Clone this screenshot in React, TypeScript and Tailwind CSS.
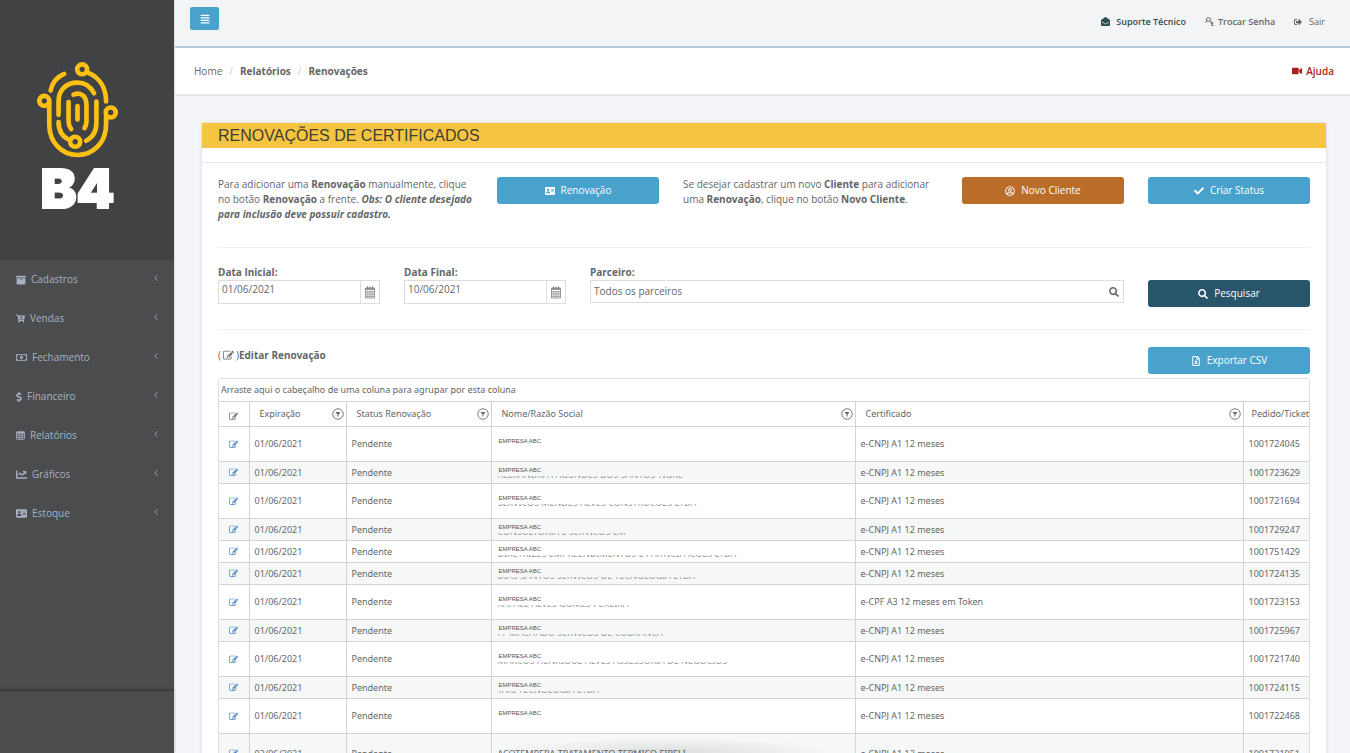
import React, { useState } from "react";
import type { IconType } from "react-icons";
import { ChevronLeft } from "lucide-react";
import {
  FaAddressCard,
  FaAlignJustify,
  FaArchive,
  FaCartPlus,
  FaChartLine,
  FaCheck,
  FaDollarSign,
  FaEnvelopeOpen,
  FaRegFileExcel,
  FaRegMoneyBillAlt,
  FaRegUserCircle,
  FaSearch,
  FaSignOutAlt,
  FaVideo,
} from "react-icons/fa";

type IconComponent = IconType | ((props: { className?: string }) => React.JSX.Element);

type MenuItem = { label: string; icon: IconComponent; size: string };

type Renewal = {
  date: string;
  certificate: string;
  ticket: string;
  height: string;
  company?: string;
  legalName?: string;
};

const menu: MenuItem[] = [
  { label: "Cadastros", icon: FaArchive, size: "w-[10px] h-[10px]" },
  { label: "Vendas", icon: FaCartPlus, size: "w-[9px] h-[9px]" },
  { label: "Fechamento", icon: FaRegMoneyBillAlt, size: "w-[11px] h-[11px]" },
  { label: "Financeiro", icon: FaDollarSign, size: "w-[6px] h-[10px]" },
  { label: "Relatórios", icon: TableIcon, size: "w-[9px] h-[9px]" },
  { label: "Gráficos", icon: FaChartLine, size: "w-[11px] h-[11px]" },
  { label: "Estoque", icon: FaAddressCard, size: "w-[11px] h-[11px]" },
];

const A1 = "e-CNPJ A1 12 meses";
const SHORT = "h-[22px]";
const TALL = "h-[35px]";

const renewals: Renewal[] = [
  { date: "01/06/2021", certificate: A1, ticket: "1001724045", height: TALL },
  { date: "01/06/2021", certificate: A1, ticket: "1001723629", height: SHORT, legalName: "ALEXANDRA FAGUNDES DOS SANTOS TIGRE" },
  { date: "01/06/2021", certificate: A1, ticket: "1001721694", height: TALL, legalName: "SERVICOS MENDES ALVES CONSTRUCOES LTDA" },
  { date: "01/06/2021", certificate: A1, ticket: "1001729247", height: SHORT, legalName: "CONSULTORIA E SERVICOS EM" },
  { date: "01/06/2021", certificate: A1, ticket: "1001751429", height: SHORT, legalName: "DIRETRIZES EMPREENDIMENTOS E PARTICIPACOES LTDA" },
  { date: "01/06/2021", certificate: A1, ticket: "1001724135", height: SHORT, legalName: "DIAS SANTOS SERVICOS DE TECNOLOGIA LTDA" },
  { date: "01/06/2021", certificate: "e-CPF A3 12 meses em Token", ticket: "1001723153", height: TALL, legalName: "RAFAEL ALVES GOMES PEREIRA" },
  { date: "01/06/2021", certificate: A1, ticket: "1001725967", height: SHORT, legalName: "J F MACHADO SERVICOS DE COBRANCA" },
  { date: "01/06/2021", certificate: A1, ticket: "1001721740", height: TALL, legalName: "MARCOS HENRIQUE ALVES ASSESSORIA DE NEGOCIOS" },
  { date: "01/06/2021", certificate: A1, ticket: "1001724115", height: SHORT, legalName: "TAXI TECNOLOGIA LTDA" },
  { date: "01/06/2021", certificate: A1, ticket: "1001722468", height: TALL },
  { date: "02/06/2021", certificate: A1, ticket: "1001721951", height: "h-[40px]", company: "ACOTEMPERA TRATAMENTO TERMICO EIRELI" },
];

function Logo() {
  return (
    <div className="flex flex-col items-center">
      <svg viewBox="108 64 248 292" className="w-[83px] h-[97px]" fill="none" stroke="#fdc013" strokeWidth="14" strokeLinecap="round">
        <circle cx="246" cy="89" r="15" />
        <circle cx="132" cy="184" r="15" />
        <circle cx="332" cy="219" r="15" />
        <circle cx="225" cy="307" r="15" />
        <path d="M151 153C156 130 170 112 192 103" />
        <path d="M262 98C299 113 318 146 318 186" />
        <path d="M147 188V255C147 309 185 347 232 347C280 347 318 309 318 255V232" />
        <path d="M175 226V186C175 149 200 129 232 129C255 129 272 142 282 161" />
        <path d="M175 248C175 273 187 293 208 302" />
        <path d="M289 186V250C289 276 278 294 258 304" />
        <path d="M220 165C244 155 259 172 259 196V245C259 254 257 260 253 266" />
        <path d="M205 188V245C205 256 208 262 213 269" />
        <path d="M232 200V240" />
      </svg>
      <span className="font-[Inter,sans-serif] font-black text-[54px] leading-[62px] text-white [-webkit-text-stroke:2px_white]">B4</span>
    </div>
  );
}

function EditIcon({ className }: { className?: string }) {
  return (
    <svg viewBox="0 0 1792 1792" fill="currentColor" className={className}>
      <path d="M888 1184l116-116-152-152-116 116v56h96v96h56zm440-720q-16-16-33 1l-350 350q-17 17-1 33t33-1l350-350q17-17 1-33zm80 594v190q0 119-84.5 203.5t-203.5 84.5h-832q-119 0-203.5-84.5t-84.5-203.5v-832q0-119 84.5-203.5t203.5-84.5h832q63 0 117 25 15 7 18 23 3 17-9 29l-49 49q-14 14-32 8-23-6-45-6h-832q-66 0-113 47t-47 113v832q0 66 47 113t113 47h832q66 0 113-47t47-113v-126q0-13 9-22l64-64q15-15 35-7t20 29zm-96-738l288 288-672 672h-288v-288zm444 132l-92 92-288-288 92-92q28-28 68-28t68 28l152 152q28 28 28 68t-28 68z" />
    </svg>
  );
}

function TableIcon({ className }: { className?: string }) {
  return (
    <svg viewBox="0 0 27 27" className={className} fill="none" stroke="currentColor" strokeWidth="2.5">
      <rect x="1.5" y="2" width="24" height="23" rx="2" />
      <path d="M2 5H25" strokeWidth="5" />
      <path d="M2 12.5H25M2 19H25M9.5 5V25M17.5 5V25" />
    </svg>
  );
}

function KeyIcon() {
  return (
    <svg viewBox="0 0 18 18" className="size-[9px]" fill="none" stroke="currentColor" strokeWidth="2">
      <ellipse cx="7" cy="5" rx="4.5" ry="3.5" />
      <path d="M4 8L1 11M9 8L12 11" />
      <circle cx="14" cy="12" r="2" />
      <path d="M14 14V18M14 17H17" />
    </svg>
  );
}

function CalendarIcon() {
  return (
    <svg viewBox="0 0 20 26" className="w-[10px] h-[13px]" fill="none" stroke="#777">
      <path d="M1 4H19V24H1Z" strokeWidth="1.5" />
      <path d="M1 6H19" strokeWidth="3" />
      <path d="M5 1V4M10 1V4M15 1V4" strokeWidth="2" />
      <path d="M3 11.5H17M3 16H17M3 20.5H17" strokeWidth="3" strokeDasharray="2.6 1.2" />
    </svg>
  );
}

function FilterIcon() {
  return (
    <svg viewBox="0 0 24 24" className="size-3 shrink-0" fill="none" stroke="#666" strokeWidth="1.7">
      <circle cx="12" cy="12" r="10.5" />
      <path d="M7 8H17L13 13V17H11V13Z" fill="#666" stroke="none" />
    </svg>
  );
}

function ActionButton({ icon: Icon, label, color }: { icon: IconType; label: string; color: string }) {
  return (
    <button className={`h-[27px] w-full rounded-[3px] text-white flex items-center justify-center gap-[6px] ${color}`}>
      <Icon className="text-[10px]" />
      {label}
    </button>
  );
}

function DateField({ id, label, initial }: { id: string; label: string; initial: string }) {
  const [value, setValue] = useState(initial);
  return (
    <div className="col-span-2">
      <label htmlFor={id} className="block font-bold leading-[15px]">{label}</label>
      <div className="flex h-6 border border-[#ddd]">
        <input
          id={id}
          className="min-w-0 flex-1 px-[3px] pb-[5px] outline-none"
          value={value}
          onChange={(e) => setValue(e.target.value)}
        />
        <button aria-label="Abrir calendário" className="w-[19px] border-l border-[#ddd] flex items-center justify-center">
          <CalendarIcon />
        </button>
      </div>
    </div>
  );
}

function HeaderCell({ children }: { children: string }) {
  return (
    <th className="border-r border-[#d3d3d3] pl-[10px] pr-[2px] font-normal">
      <div className="flex items-center justify-between">
        <span>{children}</span>
        <FilterIcon />
      </div>
    </th>
  );
}

function RenewalRow({ row, striped }: { row: Renewal; striped: boolean }) {
  return (
    <tr className={`border-b border-[#d3d3d3] ${row.height} ${striped ? "bg-[#f6f8f7]" : "bg-white"}`}>
      <td className="border-r border-[#d3d3d3]">
        <a href="#editar" aria-label="Editar renovação" className="flex justify-center text-[#3c7fc0]">
          <EditIcon className="size-[9px]" />
        </a>
      </td>
      <td className="border-r border-[#d3d3d3] pl-[5px]">{row.date}</td>
      <td className="border-r border-[#d3d3d3] pl-[5px]">Pendente</td>
      <td className="border-r border-[#d3d3d3] pl-[6px]">
        {row.company ? (
          row.company
        ) : (
          <div className="pb-[2px] text-[#999]">
            <div className="pl-px font-['Liberation_Sans',sans-serif] text-[6px] leading-[8px] text-[#555]">EMPRESA ABC</div>
            <div className="mt-[2px] flex h-[2px] items-end overflow-hidden leading-[7px]">{row.legalName}</div>
          </div>
        )}
      </td>
      <td className="border-r border-[#d3d3d3] pl-[5px]">{row.certificate}</td>
      <td className="pl-[5px]">{row.ticket}</td>
    </tr>
  );
}

export default function App() {
  const [partner, setPartner] = useState("Todos os parceiros");

  return (
    <div className="flex h-screen overflow-hidden bg-[#f4f5f8] font-['Open_Sans',sans-serif] text-[10px] text-[#646668]">
      <aside className="flex w-[174px] shrink-0 flex-col bg-[#4b4c4e] text-[#a7b1c2]">
        <div className="h-[260px] bg-[#414244] pt-[61px]">
          <div className="pr-[19px]">
            <Logo />
          </div>
        </div>
        <nav className="flex-1">
          {menu.map(({ label, icon: Icon, size }) => (
            <a key={label} href="#menu" className="flex h-[39px] items-center pl-4 pr-[13px]">
              <Icon className={`mr-[5px] ${size}`} />
              {label}
              <ChevronLeft className="mb-1 ml-auto size-[10px]" />
            </a>
          ))}
        </nav>
        <div className="h-[63px] border-t border-[#343537] shadow-[0_-1px_2px_#3c3d3f]" />
      </aside>

      <div className="min-w-0 flex-1 border-l border-[#dcdde0]">
        <header className="flex h-12 items-start justify-between border-b-2 border-[#b3cbd9] bg-[#f3f4f6] pl-[15px] pr-[25px]">
          <button aria-label="Menu" className="mt-[7px] flex h-[23px] w-[29px] items-center justify-center rounded-[2px] bg-[#49a2cc] text-white">
            <FaAlignJustify className="text-[10px]" />
          </button>
          <div className="flex h-[43px] items-center gap-[19px] text-[9px]">
            <a href="#suporte" className="flex items-center gap-[6px] font-semibold text-[#2f4f4f]">
              <FaEnvelopeOpen />
              Suporte Técnico
            </a>
            <a href="#senha" className="flex items-center gap-1 font-semibold">
              <KeyIcon />
              Trocar Senha
            </a>
            <a href="#sair" className="flex items-center gap-[7px]">
              <FaSignOutAlt className="text-[8px]" />
              Sair
            </a>
          </div>
        </header>

        <div className="flex h-12 items-center justify-between border-b-2 border-[#e5e6e8] bg-white pl-[19px] pr-4">
          <nav className="flex">
            <a href="#home">Home</a>
            <span className="px-[7px] text-[#ccc]">/</span>
            <a href="#relatorios" className="font-bold">Relatórios</a>
            <span className="px-[7px] text-[#ccc]">/</span>
            <strong>Renovações</strong>
          </nav>
          <a href="#ajuda" className="flex items-center gap-1 font-semibold text-[#a81e22]">
            <FaVideo />
            Ajuda
          </a>
        </div>

        <main className="mt-[27px] ml-[27px] mr-6 bg-white shadow-[0_0_3px_#cfd2d6]">
          <h1 className="h-[25px] bg-[#f5c542] pl-4 font-['Liberation_Sans',sans-serif] text-[16px] leading-[25px] text-[#3f3d36]">
            RENOVAÇÕES DE CERTIFICADOS
          </h1>
          <div className="h-[15px] border-b border-[#e4eaec]" />

          <div className="px-4">
            <section className="grid h-[85px] grid-cols-12 gap-6 border-b border-[#f0f0f0] pt-[14px] leading-[15px]">
              <p className="col-span-3">
                Para adicionar uma <b>Renovação</b> manualmente, clique no botão <b>Renovação</b> a frente.{" "}
                <b><i>Obs: O cliente desejado para inclusão deve possuir cadastro.</i></b>
              </p>
              <div className="col-span-2">
                <ActionButton icon={FaAddressCard} label="Renovação" color="bg-[#49a2cc]" />
              </div>
              <p className="col-span-3">
                Se desejar cadastrar um novo <b>Cliente</b> para adicionar uma <b>Renovação</b>, clique no botão <b>Novo Cliente</b>.
              </p>
              <div className="col-span-2">
                <ActionButton icon={FaRegUserCircle} label="Novo Cliente" color="bg-[#ba6d28]" />
              </div>
              <div className="col-span-2">
                <ActionButton icon={FaCheck} label="Criar Status" color="bg-[#49a2cc]" />
              </div>
            </section>

            <section className="grid h-[82px] grid-cols-12 gap-6 border-b border-[#f0f0f0] pt-[17px]">
              <DateField id="data-inicial" label="Data Inicial:" initial="01/06/2021" />
              <DateField id="data-final" label="Data Final:" initial="10/06/2021" />
              <div className="col-span-6">
                <label htmlFor="parceiro" className="block font-bold leading-[15px]">Parceiro:</label>
                <div className="flex h-[23px] items-center border border-[#ddd]">
                  <input
                    id="parceiro"
                    className="min-w-0 flex-1 px-[3px] outline-none"
                    value={partner}
                    onChange={(e) => setPartner(e.target.value)}
                  />
                  <button aria-label="Buscar parceiro" className="px-1">
                    <FaSearch className="text-[10px]" />
                  </button>
                </div>
              </div>
              <div className="col-span-2 pt-[15px]">
                <ActionButton icon={FaSearch} label="Pesquisar" color="bg-[#27566b]" />
              </div>
            </section>

            <section className="grid grid-cols-12 gap-6 pt-[17px]">
              <div className="col-span-10 flex h-4 items-center">
                (<EditIcon className="mx-[2px] size-[11px]" />)<b>Editar Renovação</b>
              </div>
              <div className="col-span-2">
                <ActionButton icon={FaRegFileExcel} label="Exportar CSV" color="bg-[#49a2cc]" />
              </div>
            </section>

            <div className="mt-1 overflow-hidden rounded-t-[3px] border border-[#ddd] font-['Noto_Sans',sans-serif] text-[9px] leading-[12px]">
              <div className="flex h-[22px] items-center pl-[2px]">
                Arraste aqui o cabeçalho de uma coluna para agrupar por esta coluna
              </div>
              <table className="w-full table-fixed border-collapse whitespace-nowrap text-left">
                <colgroup>
                  <col className="w-[30px]" />
                  <col className="w-[97px]" />
                  <col className="w-[145px]" />
                  <col className="w-[33.4%]" />
                  <col />
                  <col className="w-[66px]" />
                </colgroup>
                <thead>
                  <tr className="h-[25px] border-y border-[#d3d3d3]">
                    <th className="border-r border-[#d3d3d3]">
                      <EditIcon className="mx-auto mt-1 size-[9px]" />
                    </th>
                    <HeaderCell>Expiração</HeaderCell>
                    <HeaderCell>Status Renovação</HeaderCell>
                    <HeaderCell>Nome/Razão Social</HeaderCell>
                    <HeaderCell>Certificado</HeaderCell>
                    <th className="overflow-hidden pl-[8px] font-normal">Pedido/Ticket</th>
                  </tr>
                </thead>
                <tbody>
                  {renewals.map((row, index) => (
                    <RenewalRow key={row.ticket} row={row} striped={index % 2 === 1} />
                  ))}
                </tbody>
              </table>
            </div>
          </div>
        </main>
      </div>
      {/* soft shade rising from the window's lower edge */}
      <div className="pointer-events-none fixed bottom-0 left-[37%] h-4 w-[25%] bg-[radial-gradient(ellipse_at_bottom,#0000001a,transparent_70%)]" />
    </div>
  );
}
